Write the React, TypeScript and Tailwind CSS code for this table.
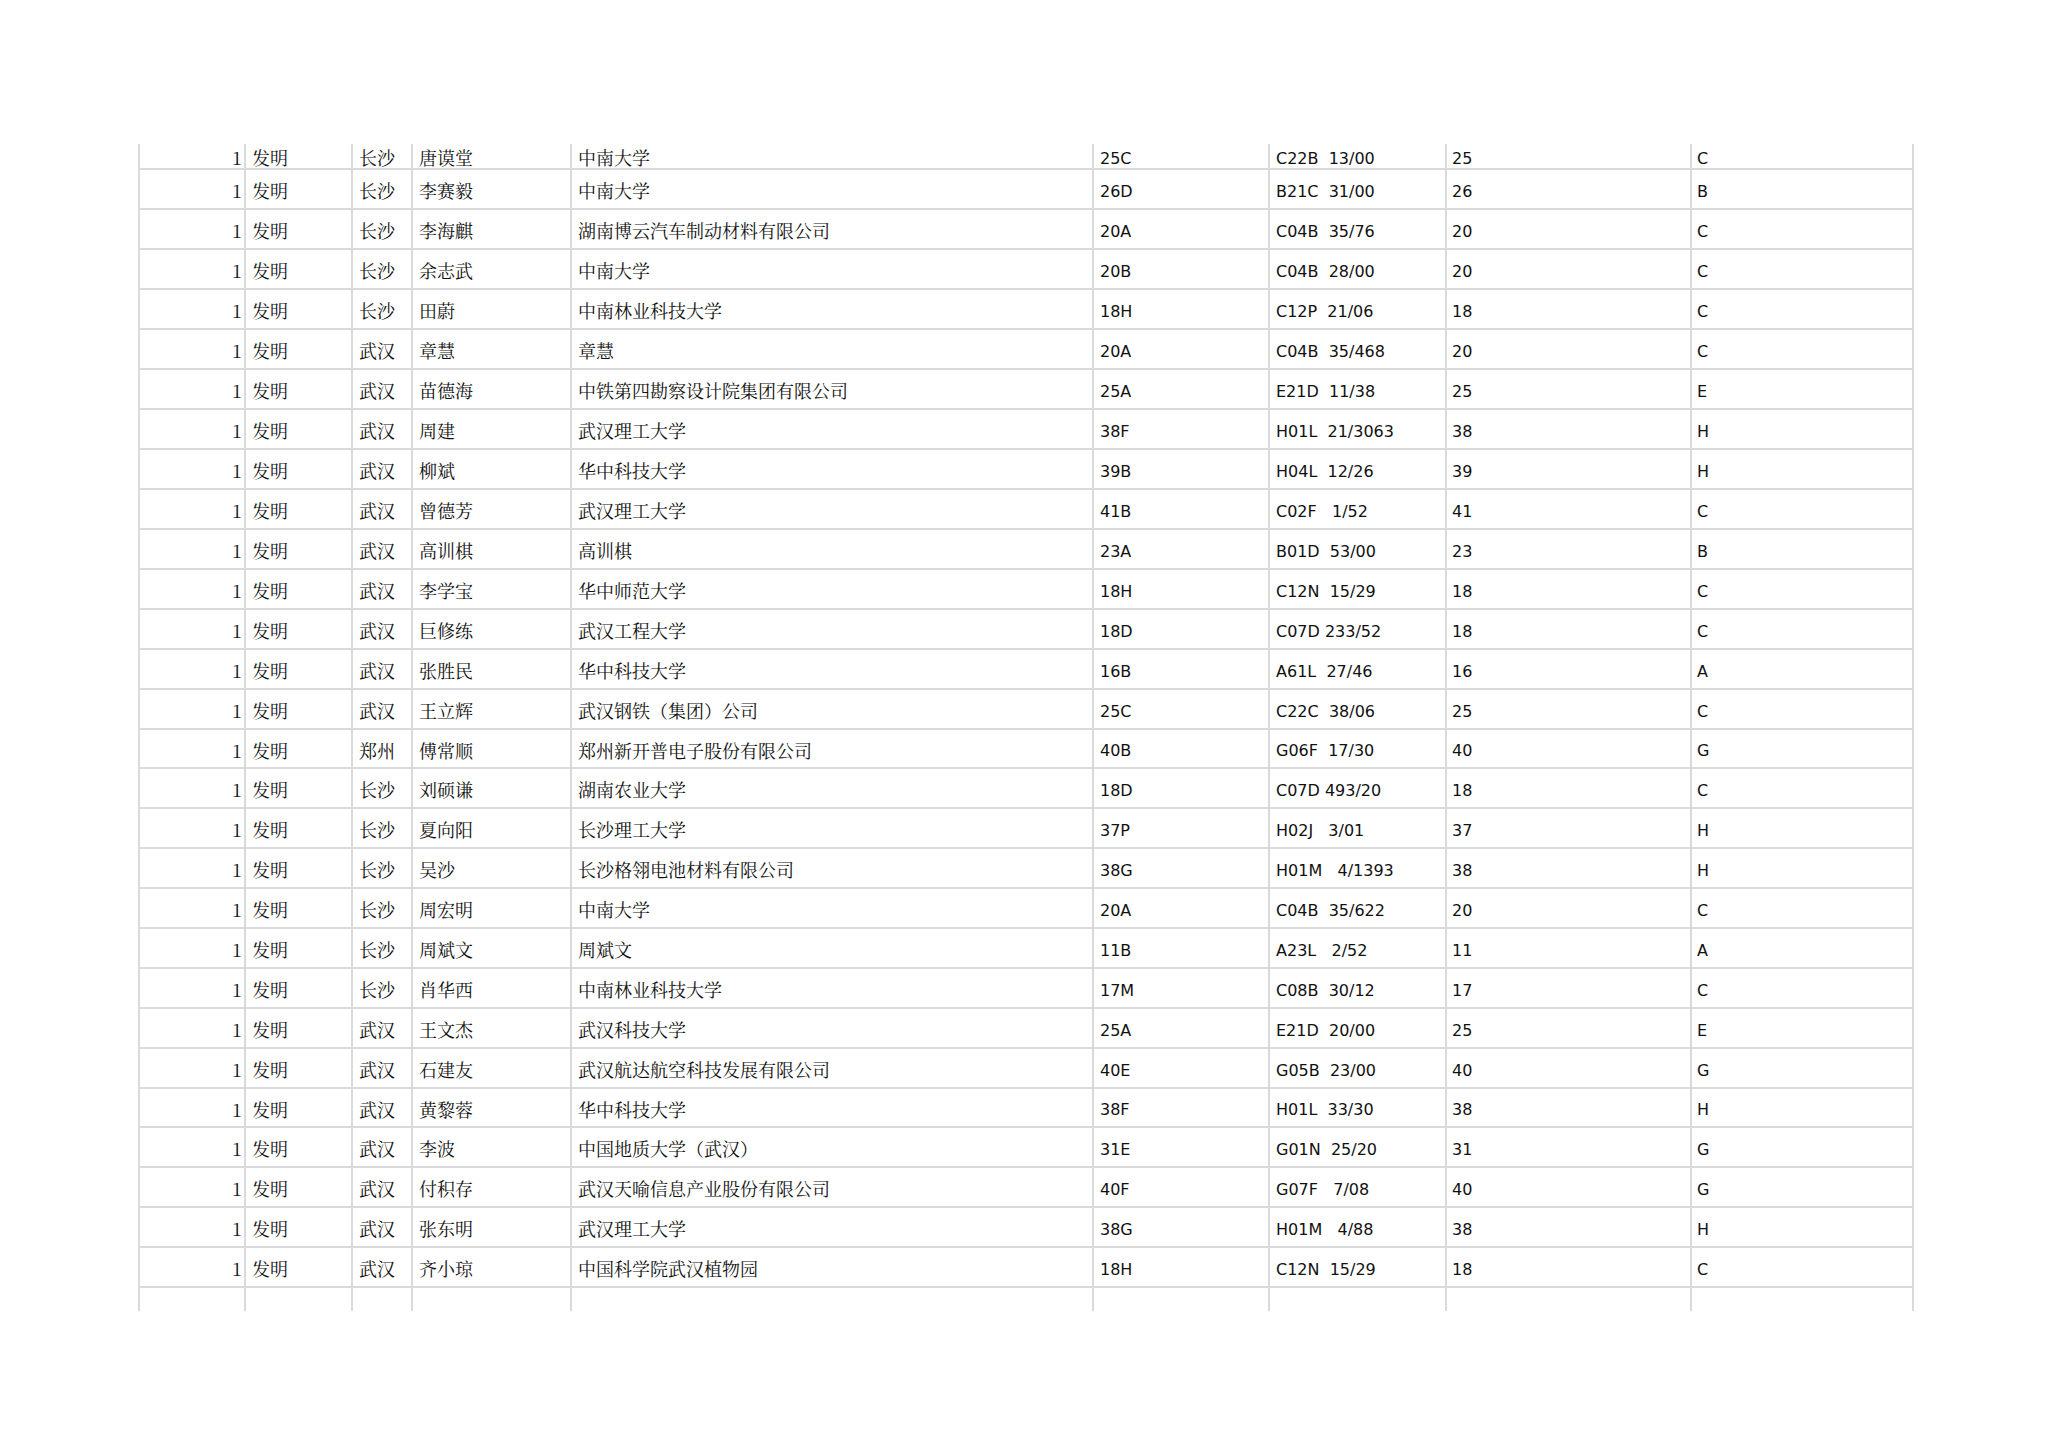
import React from "react";

type Row = [string, string, string, string, string, string, string, string, string];

const rows: Row[] = [
  ["1", "发明", "长沙", "唐谟堂", "中南大学", "25C", "C22B  13/00", "25", "C"],
  ["1", "发明", "长沙", "李赛毅", "中南大学", "26D", "B21C  31/00", "26", "B"],
  ["1", "发明", "长沙", "李海麒", "湖南博云汽车制动材料有限公司", "20A", "C04B  35/76", "20", "C"],
  ["1", "发明", "长沙", "余志武", "中南大学", "20B", "C04B  28/00", "20", "C"],
  ["1", "发明", "长沙", "田蔚", "中南林业科技大学", "18H", "C12P  21/06", "18", "C"],
  ["1", "发明", "武汉", "章慧", "章慧", "20A", "C04B  35/468", "20", "C"],
  ["1", "发明", "武汉", "苗德海", "中铁第四勘察设计院集团有限公司", "25A", "E21D  11/38", "25", "E"],
  ["1", "发明", "武汉", "周建", "武汉理工大学", "38F", "H01L  21/3063", "38", "H"],
  ["1", "发明", "武汉", "柳斌", "华中科技大学", "39B", "H04L  12/26", "39", "H"],
  ["1", "发明", "武汉", "曾德芳", "武汉理工大学", "41B", "C02F   1/52", "41", "C"],
  ["1", "发明", "武汉", "高训棋", "高训棋", "23A", "B01D  53/00", "23", "B"],
  ["1", "发明", "武汉", "李学宝", "华中师范大学", "18H", "C12N  15/29", "18", "C"],
  ["1", "发明", "武汉", "巨修练", "武汉工程大学", "18D", "C07D 233/52", "18", "C"],
  ["1", "发明", "武汉", "张胜民", "华中科技大学", "16B", "A61L  27/46", "16", "A"],
  ["1", "发明", "武汉", "王立辉", "武汉钢铁（集团）公司", "25C", "C22C  38/06", "25", "C"],
  ["1", "发明", "郑州", "傅常顺", "郑州新开普电子股份有限公司", "40B", "G06F  17/30", "40", "G"],
  ["1", "发明", "长沙", "刘硕谦", "湖南农业大学", "18D", "C07D 493/20", "18", "C"],
  ["1", "发明", "长沙", "夏向阳", "长沙理工大学", "37P", "H02J   3/01", "37", "H"],
  ["1", "发明", "长沙", "吴沙", "长沙格翎电池材料有限公司", "38G", "H01M   4/1393", "38", "H"],
  ["1", "发明", "长沙", "周宏明", "中南大学", "20A", "C04B  35/622", "20", "C"],
  ["1", "发明", "长沙", "周斌文", "周斌文", "11B", "A23L   2/52", "11", "A"],
  ["1", "发明", "长沙", "肖华西", "中南林业科技大学", "17M", "C08B  30/12", "17", "C"],
  ["1", "发明", "武汉", "王文杰", "武汉科技大学", "25A", "E21D  20/00", "25", "E"],
  ["1", "发明", "武汉", "石建友", "武汉航达航空科技发展有限公司", "40E", "G05B  23/00", "40", "G"],
  ["1", "发明", "武汉", "黄黎蓉", "华中科技大学", "38F", "H01L  33/30", "38", "H"],
  ["1", "发明", "武汉", "李波", "中国地质大学（武汉）", "31E", "G01N  25/20", "31", "G"],
  ["1", "发明", "武汉", "付积存", "武汉天喻信息产业股份有限公司", "40F", "G07F   7/08", "40", "G"],
  ["1", "发明", "武汉", "张东明", "武汉理工大学", "38G", "H01M   4/88", "38", "H"],
  ["1", "发明", "武汉", "齐小琼", "中国科学院武汉植物园", "18H", "C12N  15/29", "18", "C"],
];

const cjk = "[font-family:'Noto_Serif_CJK_SC','Noto_Sans_CJK_SC',serif] text-[18px] pt-[2px]";
const lat = "[font-family:'DejaVu_Sans','Verdana',sans-serif] text-[16px] pt-[5px]";

const cellBase = "flex items-center leading-none whitespace-pre text-[#111] border-l-2 border-[#dadada]";

function Cells({ r }: { r: Row | null }) {
  const v = r ?? ["", "", "", "", "", "", "", "", ""];
  return (
    <>
      <div className={`${cellBase} ${cjk} w-[106px] justify-end pr-[2px]`}>{v[0]}</div>
      <div className={`${cellBase} ${cjk} w-[107px] pl-[6px]`}>{v[1]}</div>
      <div className={`${cellBase} ${cjk} w-[60px] pl-[6px]`}>{v[2]}</div>
      <div className={`${cellBase} ${cjk} w-[159px] pl-[6px]`}>{v[3]}</div>
      <div className={`${cellBase} ${cjk} w-[522px] pl-[6px]`}>{v[4]}</div>
      <div className={`${cellBase} ${lat} w-[176px] pl-[6px]`}>{v[5]}</div>
      <div className={`${cellBase} ${lat} w-[177px] pl-[6px]`}>{v[6]}</div>
      <div className={`${cellBase} ${lat} w-[245px] pl-[5px]`}>{v[7]}</div>
      <div className={`${cellBase} ${lat} w-[224px] pl-[5px] border-r-2`}>{v[8]}</div>
    </>
  );
}

export default function App() {
  return (
    <div className="min-h-[1447px] w-[2048px] bg-white pt-[144px] pl-[138px]">
      <div className="flex flex-col w-[1776px]">
        {rows.map((r, i) => {
          const h =
            i === 0
              ? "h-[26px]"
              : i === 15 || i === 24
              ? "h-[39px]"
              : "h-[40px]";
          return (
            <div key={i} className={`flex ${h} border-b-2 border-[#dadada] box-border`}>
              <Cells r={r} />
            </div>
          );
        })}
        <div className="flex h-[23px]">
          <Cells r={null} />
        </div>
      </div>
    </div>
  );
}
